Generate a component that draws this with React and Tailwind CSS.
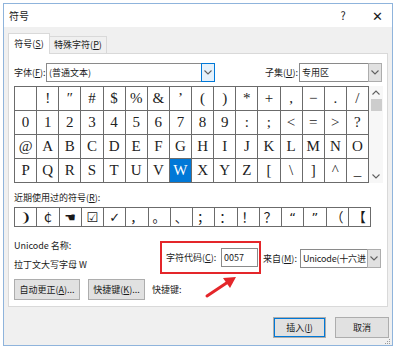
import React from 'react';

const U = ({ children }) => <span className="underline underline-offset-[1px]">{children}</span>;

const rows = [
  [' ', '!', '″', '#', '$', '%', '&', '’', '(', ')', '*', '+', ',', '−', '.', '/'],
  ['0', '1', '2', '3', '4', '5', '6', '7', '8', '9', ':', ';', '<', '=', '>', '?'],
  ['@', 'A', 'B', 'C', 'D', 'E', 'F', 'G', 'H', 'I', 'J', 'K', 'L', 'M', 'N', 'O'],
  ['P', 'Q', 'R', 'S', 'T', 'U', 'V', 'W', 'X', 'Y', 'Z', '[', '\\', ']', '^', '_'],
];

const recent = ['❩', '₵', '☚', '☑', '✓', '，', '。', '、', '；', '：', '！', '？', '“', '”', '（', '【'];

const Chevron = ({ up }) => (
  <svg width="8" height="5" viewBox="0 0 8 5">
    <path d={up ? 'M0.5 4.5 L4 1 L7.5 4.5' : 'M0.5 0.5 L4 4 L7.5 0.5'} fill="none" stroke="#606060" strokeWidth="1.1" />
  </svg>
);

const Select = ({ width, text, focused }) => (
  <div className={`flex h-[19px] bg-white border border-[#8a8a8a] ${width}`}>
    <div className="flex-1 min-w-0 overflow-hidden flex items-center pl-[2px] leading-none">{text}</div>
    <div
      className={`-my-px -mr-px w-[14px] shrink-0 flex items-center justify-center border ${
        focused ? 'border-[#0078d7] bg-[#e5f1fb]' : 'border-[#adadad] bg-[#e1e1e1]'
      }`}
    >
      <Chevron />
    </div>
  </div>
);

const Btn = ({ children, className = '' }) => (
  <div className={`h-[21px] flex items-center justify-center bg-[#e1e1e1] border border-[#adadad] leading-none ${className}`}>
    {children}
  </div>
);

export default function App() {
  return (
    <div
      className="relative w-[397px] h-[350px] bg-white overflow-hidden whitespace-nowrap text-[9px] text-[#1a1a1a]"
      style={{ fontFamily: '"Noto Sans CJK SC", "Noto Sans", sans-serif' }}
    >
      <div className="ml-[3px] mt-[3px] w-[390px] h-[343px] border border-[#8fb4dc] bg-[#f0f0f0] flex flex-col">
        {/* title bar */}
        <div className="h-[23px] bg-white flex items-center pl-[5px]">
          <span className="flex-1 text-[10px]">符号</span>
          <div className="w-[30px] text-center text-[11px]">?</div>
          <div className="w-[30px] ml-[4px] text-center text-[13px] font-light leading-none">✕</div>
        </div>

        {/* tabs */}
        <div className="flex items-end pl-[4px] pt-[6px]">
          <div className="relative z-10 -mb-px w-[42px] h-[21px] bg-white border-l border-t border-r border-[#d9d9d9] flex items-center justify-center">
            符号(<U>S</U>)
          </div>
          <div className="w-[57px] h-[17px] bg-[#f0f0f0] border-t border-r border-[#d9d9d9] flex items-center justify-center">
            特殊字符(<U>P</U>)
          </div>
        </div>

        {/* panel */}
        <div className="ml-[4px] w-[380px] h-[254px] bg-white border border-[#d9d9d9] pl-[5px] pt-[9px]">
          <div className="flex items-center h-[19px]">
            <div className="w-[32px]">字体(<U>F</U>):</div>
            <Select width="w-[169px]" text="(普通文本)" focused />
            <div className="ml-[50px] w-[34px]">子集(<U>U</U>):</div>
            <Select width="w-[83px]" text="专用区" />
          </div>

          <div className="flex mt-[4px]">
            <div
              className="w-[355px] grid grid-cols-[repeat(16,minmax(0,1fr))] border-l border-t border-[#6b6b6b] text-[15px] text-[#222]"
              style={{ fontFamily: '"Liberation Serif", serif' }}
            >
              {rows.flat().map((c, i) => {
                const sel = c === 'W';
                return (
                  <div
                    key={i}
                    className={`h-[24px] border-r border-b border-[#6b6b6b] flex items-center justify-center leading-none ${
                      sel ? 'bg-[#0078d7] text-white' : ''
                    }`}
                  >
                    {c}
                  </div>
                );
              })}
            </div>
            <div className="w-[14px] h-[97px] bg-[#f7f7f7] flex flex-col items-center">
              <div className="h-[13px] flex items-center"><Chevron up /></div>
              <div className="w-[11px] h-[12px] bg-[#cdcdcd]" />
              <div className="flex-1" />
              <div className="h-[13px] flex items-center"><Chevron /></div>
            </div>
          </div>

          <div className="mt-[9px] h-[12px] leading-[12px]">近期使用过的符号(<U>R</U>):</div>
          <div
            className="mt-[3px] w-[357px] grid grid-cols-[repeat(16,minmax(0,1fr))] border-l border-t border-[#6b6b6b] text-[13px]"
            style={{ fontFamily: '"DejaVu Sans", "Noto Sans CJK SC", sans-serif' }}
          >
            {recent.map((c, i) => (
              <div key={i} className="h-[19px] border-r border-b border-[#6b6b6b] flex items-center justify-center leading-none">
                {c}
              </div>
            ))}
          </div>

          <div className="flex items-start mt-[13px]">
            <div className="w-[146px]">
              <div className="h-[12px] leading-[12px]">Unicode 名称:</div>
              <div className="mt-[7px] h-[12px] leading-[12px]">拉丁文大写字母 W</div>
            </div>
            <div className="mt-px w-[101px] h-[33px] border-2 border-[#e4262a] flex items-center pl-[4px]">
              <div className="w-[55px]">字符代码(<U>C</U>):</div>
              <div className="w-[37px] h-[19px] border border-[#8a8a8a] bg-white flex items-center pl-[2px] leading-none">
                0057
              </div>
            </div>
            <div className="flex items-center h-[19px] mt-[9px] ml-[2px]">
              <div className="w-[37px]">来自(<U>M</U>):</div>
              <Select width="w-[81px]" text={<span className="tracking-[-0.2px]">Unicode(十六进</span>} />
            </div>
          </div>

          <div className="flex items-center mt-[5px]">
            <Btn className="w-[66px]">自动更正(<U>A</U>)...</Btn>
            <Btn className="w-[57px] ml-[8px]">快捷键(<U>K</U>)...</Btn>
            <div className="ml-[7px]">快捷键:</div>
          </div>
        </div>

        {/* footer buttons */}
        <div className="flex justify-end pr-[3px] mt-[10px]">
          <Btn className="w-[53px] h-[20px] border-[#0078d7] shadow-[inset_0_0_0_1px_#0078d7]">插入(<U>I</U>)</Btn>
          <Btn className="w-[54px] h-[20px] ml-[9px]">取消</Btn>
        </div>
      </div>

      {/* annotation arrow */}
      <svg className="absolute left-[200px] top-[270px]" width="42" height="32" viewBox="0 0 42 32">
        <path d="M7 26 L28 12" stroke="#e4262a" strokeWidth="3" strokeLinecap="round" />
        <path d="M36 7 L23 8 L30 18 Z" fill="#e4262a" />
      </svg>

      {/* resize grip */}
      <svg className="absolute left-[383px] top-[337px]" width="8" height="8" viewBox="0 0 8 8">
        <rect x="6" y="2" width="1" height="1" fill="#9a9a9a" />
        <rect x="4" y="4" width="1" height="1" fill="#9a9a9a" />
        <rect x="6" y="4" width="1" height="1" fill="#9a9a9a" />
        <rect x="2" y="6" width="1" height="1" fill="#9a9a9a" />
        <rect x="4" y="6" width="1" height="1" fill="#9a9a9a" />
        <rect x="6" y="6" width="1" height="1" fill="#9a9a9a" />
      </svg>
    </div>
  );
}
